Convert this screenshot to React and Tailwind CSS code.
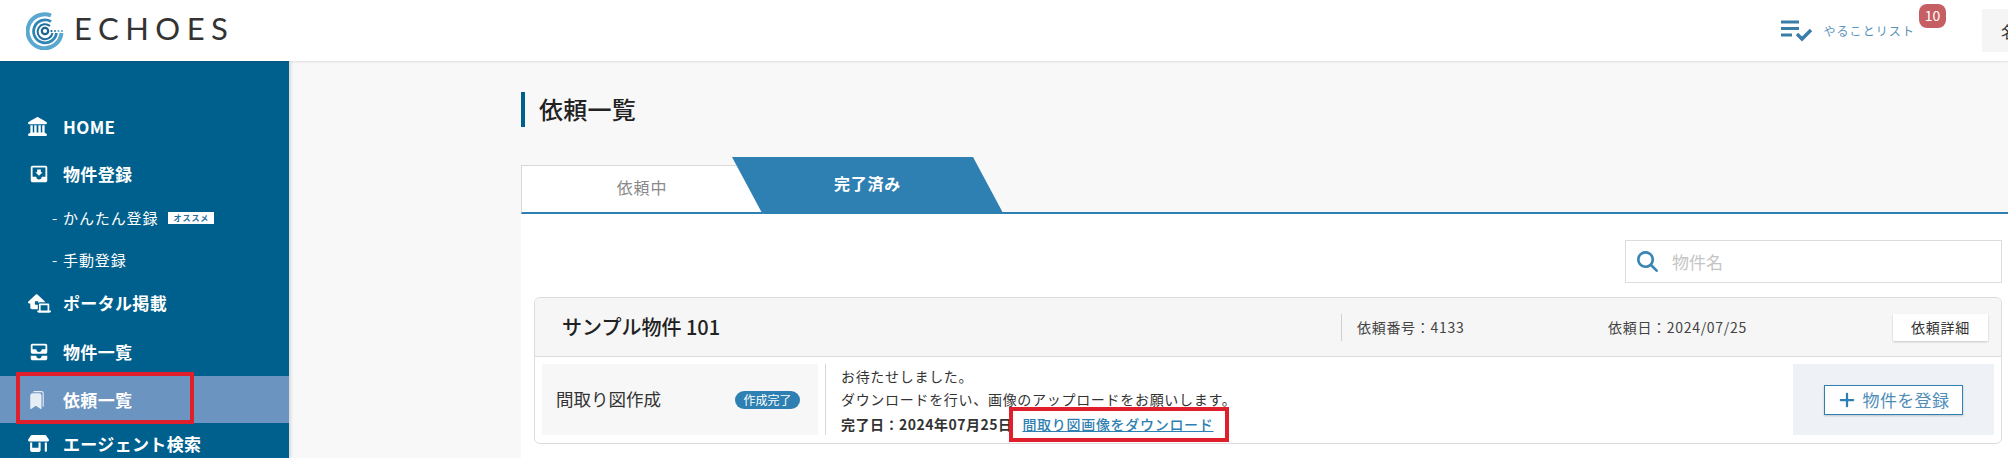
import React from 'react';
import { FaLandmark, FaHouseLaptop, FaMagnifyingGlass, FaPlus, FaShop } from 'react-icons/fa6';
import { MdMoveToInbox, MdAllInbox } from 'react-icons/md';
import { BsBookmarksFill } from 'react-icons/bs';

const font = { fontFamily: '"Noto Sans CJK JP", "Noto Sans", sans-serif' };

const Logo = () => (
  <svg width="38" height="38" viewBox="0 0 38 38" fill="none">
    <path d="M25 3.5A17 17 0 1 0 35.5 21" stroke="#5aa7cf" strokeWidth="4" />
    <path d="M25 9.5A11.5 11.5 0 1 0 30.5 21" stroke="#2f86b5" strokeWidth="2.8" />
    <path d="M24 14A7.5 7.5 0 1 0 26.5 21" stroke="#1f6f9f" strokeWidth="2" />
    <circle cx="19" cy="19" r="3.2" stroke="#1c6391" strokeWidth="2.2" />
    <circle cx="25.5" cy="19" r="1.1" fill="#1c6391" />
    <circle cx="29" cy="19" r="1.1" fill="#2f86b5" />
    <circle cx="32.5" cy="19" r="1.1" fill="#5aa7cf" />
    <circle cx="36" cy="19" r="1.1" fill="#5aa7cf" />
  </svg>
);

const TodoIcon = () => (
  <svg width="32" height="22" viewBox="0 0 32 22" fill="none">
    <path d="M0 2h18M0 8.5h18M0 15h11" stroke="#3a7ea8" strokeWidth="3" />
    <path d="M16 14l5 5 9-9" stroke="#3a7ea8" strokeWidth="3.4" />
  </svg>
);

const NavItem = ({ icon, label, active, className = '' }) => (
  <div className={`flex h-[47px] items-center pl-[28px] text-[17px] font-bold tracking-[0.02em] text-white ${active ? 'bg-[#6c94c0]' : ''} ${className}`}>
    <span className="flex w-[35px] shrink-0 items-center text-[19px]">{icon}</span>
    {label}
  </div>
);

const SubItem = ({ label, badge }) => (
  <div className="flex h-[42px] items-center pl-[52px] text-[15px] tracking-[0.06em] text-white">
    <span className="w-[11px]">-</span>
    {label}
    {badge && (
      <span className="ml-[10px] flex h-[12px] w-[46px] items-center justify-center bg-white text-[8px] font-bold leading-none text-[#1f6f9f]">
        {badge}
      </span>
    )}
  </div>
);

const Sidebar = () => (
  <aside className="relative h-full w-[289px] shrink-0 bg-[#00608d] pt-[42px] shadow-[2px_0_3px_rgba(0,0,0,0.12)]">
    <NavItem icon={<FaLandmark />} label="HOME" />
    <NavItem icon={<MdMoveToInbox className="text-[22px]" />} label="物件登録" />
    <SubItem label="かんたん登録" badge="オススメ" />
    <SubItem label="手動登録" />
    <NavItem icon={<FaHouseLaptop className="text-[23px]" />} label="ポータル掲載" className="pb-[3px]" />
    <NavItem icon={<MdAllInbox className="text-[22px]" />} label="物件一覧" className="h-[48px] pb-[1px]" />
    <NavItem icon={<BsBookmarksFill className="text-[18px] text-[#e6edf5]" />} label="依頼一覧" active />
    <NavItem icon={<FaShop className="text-[21px]" />} label="エージェント検索" className="pb-[6px]" />
    <div className="absolute left-[16px] top-[311px] h-[52px] w-[178px] border-4 border-[#e01f2d]" />
  </aside>
);

const Tabs = () => (
  <div className="flex h-[57px] items-end border-b-2 border-[#2e7fb2]">
    <div className="-mb-[2px] flex h-[49px] w-[243px] items-center justify-center border border-b-2 border-[#d8d8d8] border-b-[#2e7fb2] bg-white pb-[5px] pr-[1px] text-[16px] tracking-[0.05em] text-[#8a8a8a]">
      依頼中
    </div>
    <div className="-ml-[32px] -mb-[1px] flex h-[56px] w-[271px] items-center justify-center bg-[#2e7fb2] pb-[4px] text-[16px] font-bold tracking-[0.05em] text-white [clip-path:polygon(0_0,241px_0,100%_100%,30px_100%)]">
      完了済み
    </div>
  </div>
);

const Card = () => (
  <div className="relative overflow-visible rounded-[6px] border border-[#dcdcdc] bg-white">
    <div className="flex h-[59px] items-center rounded-t-[6px] border-b border-[#dcdcdc] bg-[#f6f6f6] pl-[27px]">
      <div className="w-[779px] text-[20px] font-medium text-[#222]">サンプル物件 101</div>
      <div className="flex h-[27px] w-[268px] items-center border-l border-[#d0d0d0] pl-[15px] text-[14px] tracking-[0.05em] text-[#444]">
        依頼番号：4133
      </div>
      <div className="w-[284px] -ml-[1px] text-[14px] tracking-[0.05em] text-[#444]">依頼日：2024/07/25</div>
      <button className="ml-[1px] h-[27px] w-[95px] bg-white text-[14px] tracking-[0.05em] text-[#333] shadow-[0_1px_2px_rgba(0,0,0,0.2)]">
        依頼詳細
      </button>
    </div>
    <div className="flex h-[86px] px-[7px] pt-[7px]">
      <div className="flex h-[71px] w-[277px] items-center justify-between bg-[#f7f7f7] pl-[14px] pr-[18px]">
        <span className="text-[17.5px] text-[#333]">間取り図作成</span>
        <span className="flex h-[18px] w-[65px] items-center justify-center rounded-full bg-[#2e7fb2] text-[12px] text-white">
          作成完了
        </span>
      </div>
      <div className="ml-[7px] h-[71px] w-[972px] border-l border-[#d8d8d8] pl-[15px] text-[14px] tracking-[0.05em] text-[#333]">
        <p className="mt-[1px] leading-[23px]">お待たせしました。</p>
        <p className="leading-[23px]">ダウンロードを行い、画像のアップロードをお願いします。</p>
        <p className="mt-[3px] flex leading-[21px]">
          <span className="font-bold tracking-[0.035em]">完了日：2024年07月25日</span>
          <a className="ml-[10px] font-medium text-[#2e7fb2] underline">間取り図画像をダウンロード</a>
        </p>
      </div>
      <div className="flex h-[71px] w-[202px] items-center justify-center bg-[#eef2f7]">
        <button className="flex h-[30px] w-[139px] items-center justify-center gap-[7px] border border-[#2e7fb2] bg-white text-[17px] tracking-[0.02em] text-[#4f8db8] shadow-[0_1px_2px_rgba(0,0,0,0.2)]">
          <FaPlus className="text-[18px] text-[#2e7fb2]" />
          物件を登録
        </button>
      </div>
    </div>
    <div className="absolute left-[474px] top-[109px] h-[35px] w-[220px] border-[4px] border-[#e01f2d]" />
  </div>
);

export default function App() {
  return (
    <div className="h-[458px] w-[2008px] overflow-hidden bg-[#f8f8f8]" style={font}>
      <header className="relative z-10 flex h-[61px] items-center bg-white pl-[26px] shadow-[0_1px_2px_rgba(0,0,0,0.1)]">
        <Logo />
        <span className="ml-[10px] pb-[5px] text-[31px] leading-none tracking-[0.21em] text-[#333]" style={{ fontFamily: 'Lato, sans-serif' }}>
          ECHOES
        </span>
        <div className="ml-auto flex h-full items-center">
          <TodoIcon />
          <span className="ml-[10px] text-[12px] tracking-[0.09em] text-[#5b93b8]">やることリスト</span>
          <span className="relative -top-[15px] ml-[4px] flex h-[24px] w-[27px] items-center justify-center rounded-[8px] bg-[#c65f63] text-[14px] text-white">
            10
          </span>
          <div className="ml-[36px] flex h-[43px] w-[26px] items-center overflow-hidden whitespace-nowrap bg-[#f5f5f5] pl-[19px] text-[16px] text-[#333]">
            名前
          </div>
        </div>
      </header>
      <div className="flex h-[397px]">
        <Sidebar />
        <main className="min-w-0 flex-1 pl-[232px]">
          <div className="mt-[31px] flex h-[35px] items-center border-l-4 border-[#00608d] pl-[14px] pb-[2px] text-[24px] font-medium leading-none tracking-[0.01em] text-[#222]">
            依頼一覧
          </div>
          <div className="mt-[30px]">
            <Tabs />
            <div className="h-[300px] bg-white pl-[13px] pr-[6px] pt-[26px]">
              <div className="flex justify-end">
                <div className="flex h-[43px] w-[377px] items-center border border-[#dcdcdc] bg-white pl-[11px] text-[17px] text-[#c4c4c4]">
                  <FaMagnifyingGlass className="text-[21px] text-[#3a86b5]" />
                  <span className="ml-[14px]">物件名</span>
                </div>
              </div>
              <div className="mt-[14px]">
                <Card />
              </div>
              <div className="mt-[14px] h-[40px] rounded-t-[6px] border border-[#dcdcdc] bg-[#f6f6f6]" />
            </div>
          </div>
        </main>
      </div>
    </div>
  );
}
